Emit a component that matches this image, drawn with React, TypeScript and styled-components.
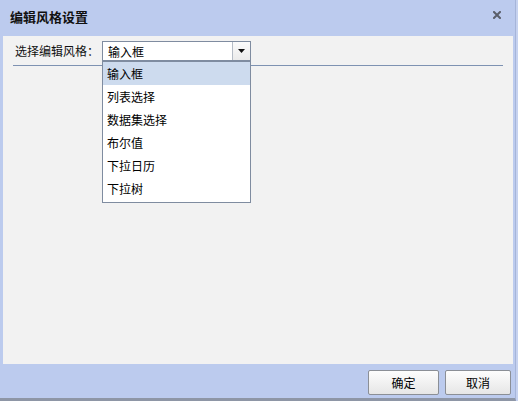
import { useState } from "react";
import styled, { createGlobalStyle } from "styled-components";

// ------ style options shown in the dropdown ------
const styles = ["输入框", "列表选择", "数据集选择", "布尔值", "下拉日历", "下拉树"];

const GlobalStyle = createGlobalStyle`
  html, body {
    margin: 0;
    padding: 0;
    background: #c6d2ef;
  }
  body {
    font-family: "Noto Sans CJK SC", "Liberation Sans", sans-serif;
    font-size: 12px;
    color: #000;
  }
`;

export default function App() {
  const [selected, setSelected] = useState(0);
  const [open, setOpen] = useState(true);

  return (
    <>
      <GlobalStyle />
      <Dialog>
        <Header>
          <Title>编辑风格设置</Title>
          <Close aria-label="关闭">
            <svg width="8" height="8" viewBox="0 0 8 8">
              <path
                d="M1 1L7 7M7 1L1 7"
                stroke="#5a5f6a"
                strokeWidth="2"
                strokeLinecap="square"
              />
            </svg>
          </Close>
        </Header>

        <Body>
          <FieldRow>
            <Label>选择编辑风格：</Label>
            <SelectWrap>
              <Select onClick={() => setOpen(!open)}>
                <SelectText>{styles[selected]}</SelectText>
                <Arrow>
                  <svg width="7" height="4" viewBox="0 0 7 4">
                    <path d="M0 0H7L3.5 4Z" fill="#111" />
                  </svg>
                </Arrow>
              </Select>
              {open ? (
                <List>
                  {styles.map((name, ind) => (
                    <Item
                      key={name}
                      $active={ind === selected}
                      onClick={() => setSelected(ind)}
                    >
                      {name}
                    </Item>
                  ))}
                </List>
              ) : null}
            </SelectWrap>
          </FieldRow>
          <Divider />
        </Body>

        <Footer>
          <Btn $w={71}>确定</Btn>
          <Btn $w={66}>取消</Btn>
        </Footer>
      </Dialog>
    </>
  );
}

// ------- component styles ------
const Dialog = styled.div`
  width: 515px;
  height: 398px;
  background: #bccbee;
  border-right: 1px solid #a6b5d9;
  border-bottom: 3px solid #8e96a6;
  display: flex;
  flex-direction: column;
`;

const Header = styled.div`
  height: 36px;
  display: flex;
  align-items: center;
  justify-content: space-between;
  padding: 0 14px 0 10px;
  box-sizing: border-box;
`;

const Title = styled.span`
  font-size: 13px;
  font-weight: 700;
  color: #111;
  margin-top: -3px;
`;

const Close = styled.span`
  display: flex;
  margin-top: -6px;
  cursor: pointer;
`;

const Body = styled.div`
  flex: 1;
  margin: 0 2px 0 3px;
  background: #f2f2f2;
  padding: 5px 10px 0 10px;
`;

const FieldRow = styled.div`
  display: flex;
  align-items: flex-start;
  padding-left: 2px;
`;

const Label = styled.span`
  width: 87px;
  line-height: 20px;
  color: #111;
`;

const SelectWrap = styled.div`
  position: relative;
  width: 149px;
`;

const Select = styled.div`
  height: 20px;
  box-sizing: border-box;
  border: 1px solid #7f8ca0;
  background: #fff;
  display: flex;
  cursor: pointer;
`;

const SelectText = styled.span`
  flex: 1;
  padding-left: 5px;
  line-height: 20px;
`;

const Arrow = styled.span`
  width: 17px;
  border-left: 1px solid #b5bcc6;
  background: linear-gradient(#fbfbfb, #ebebeb);
  display: flex;
  align-items: center;
  justify-content: center;
`;

const List = styled.ul`
  position: absolute;
  top: 20px;
  left: 0;
  width: 149px;
  box-sizing: border-box;
  margin: 0;
  padding: 0 0 2px;
  list-style: none;
  background: #fff;
  border: 1px solid #7f8ca0;
  z-index: 2;
`;

const Item = styled.li<{ $active: boolean }>`
  height: 23px;
  line-height: 23px;
  padding-left: 4px;
  font-size: 12px;
  color: #000;
  background: ${(p) => (p.$active ? "#cddbee" : "#fff")};
  cursor: pointer;
`;

const Divider = styled.div`
  height: 1px;
  background: #7e92b2;
  margin-top: 4px;
  width: 490px;
`;

const Footer = styled.div`
  height: 34px;
  display: flex;
  justify-content: flex-end;
  align-items: flex-start;
  gap: 6px;
  padding: 6px 4px 0 0;
  box-sizing: border-box;
`;

const Btn = styled.button<{ $w: number }>`
  width: ${(p) => p.$w}px;
  height: 25px;
  border: 1px solid #8b8f96;
  border-radius: 2px;
  background: linear-gradient(#fdfdfd, #e6e6e6);
  font-family: "Noto Sans CJK SC", "Liberation Sans", sans-serif;
  font-size: 12px;
  color: #000;
  padding: 0;
  cursor: pointer;
`;
